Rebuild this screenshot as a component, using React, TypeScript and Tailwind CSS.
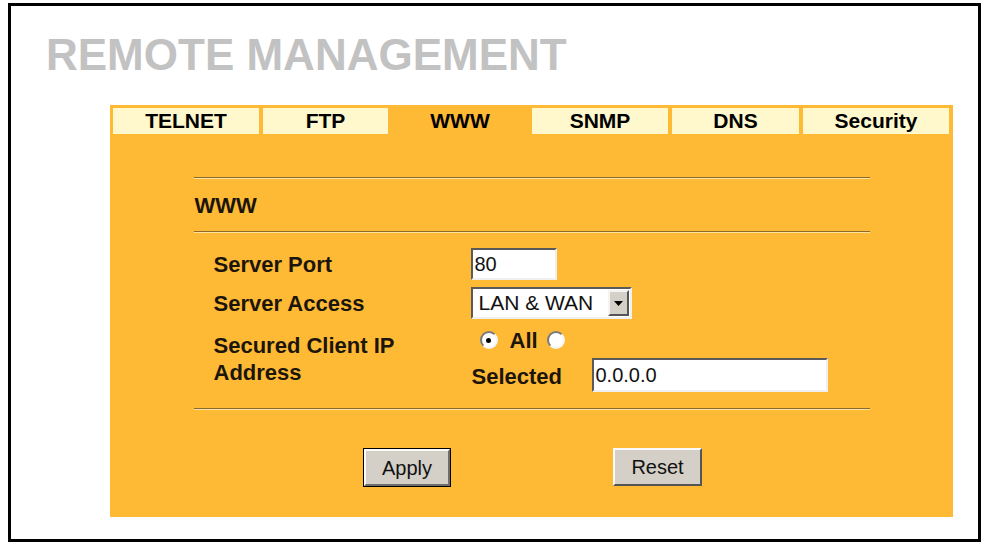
import { useState } from "react";

const tabs = [
  { label: "TELNET", width: "w-[146px]" },
  { label: "FTP", width: "w-[125px]" },
  { label: "WWW", width: "w-[136px]", active: true },
  { label: "SNMP", width: "w-[136px]" },
  { label: "DNS", width: "w-[127px]" },
  { label: "Security", width: "w-[146px]" },
];

const font = "font-['Liberation_Sans',Arial,sans-serif]";

// groove line like an old <hr>
const Rule = () => (
  <div className="h-0 border-t border-b border-t-[#8c6a2c] border-b-[#ffe3a4]" />
);

const Radio = ({ checked }: { checked?: boolean }) => (
  <span className="w-[18px] h-[18px] rounded-full bg-white border-2 border-t-[#7a7a7a] border-l-[#7a7a7a] border-b-[#f4f4f4] border-r-[#f4f4f4] flex items-center justify-center shrink-0">
    {checked && <span className="w-[5px] h-[5px] rounded-full bg-black" />}
  </span>
);

const App = () => {
  const [access] = useState("LAN & WAN");

  return (
    <div className={`w-[987px] h-[545px] bg-white overflow-hidden ${font}`}>
      <div className="ml-[8px] mt-[3px] w-[973px] h-[539px] border-[3px] border-black">
        {/* Title */}
        <h1 className="mt-[27px] pl-[35px] h-[44px] text-[44px] leading-[44px] font-bold text-[#c2c2c2]">
          REMOTE MANAGEMENT
        </h1>

        {/* Panel */}
        <div className="ml-[99px] mt-[28px] w-[843px] bg-[#feba35] pb-[30px]">
          <div className="flex gap-[4px] p-[3px] pb-0">
            {tabs.map((tab) => (
              <div
                key={tab.label}
                className={`${tab.width} h-[26px] flex items-center justify-center text-[21px] font-bold text-black ${
                  tab.active ? "bg-transparent" : "bg-[#fff8cd]"
                }`}
              >
                {tab.label}
              </div>
            ))}
          </div>

          <div className="w-[676px] mx-auto mt-[43px] text-[#1c150c]">
            <Rule />
            <div className="h-[52px] flex items-center pl-[1px] text-[22px] font-bold">
              WWW
            </div>
            <Rule />

            {/* Server Port */}
            <div className="flex items-center mt-[15px] h-[32px]">
              <div className="w-[277px] pl-[20px] text-[22px] font-bold">Server Port</div>
              <div className="w-[86px] h-[32px] bg-white border-2 border-t-[#5a5a5a] border-l-[#5a5a5a] border-b-[#f0f0f0] border-r-[#f0f0f0] flex items-center pl-[2px] text-[20px] text-[#111]">
                80
              </div>
            </div>

            {/* Server Access */}
            <div className="flex items-center mt-[7px] h-[32px]">
              <div className="w-[277px] pl-[20px] text-[22px] font-bold">Server Access</div>
              <div className="w-[161px] h-[32px] bg-white border-2 border-t-[#5a5a5a] border-l-[#5a5a5a] border-b-[#f0f0f0] border-r-[#f0f0f0] flex items-center">
                <span className="flex-1 pl-[6px] text-[21px] text-[#111] whitespace-nowrap">{access}</span>
                <span className="w-[21px] h-[26px] mr-[1px] bg-[#d4d0c8] border-2 border-t-[#f4f4f4] border-l-[#f4f4f4] border-b-[#555] border-r-[#555] flex items-center justify-center">
                  <svg width="9" height="5" viewBox="0 0 9 5">
                    <path d="M0 0h9L4.5 5z" fill="#000" />
                  </svg>
                </span>
              </div>
            </div>

            {/* Secured Client IP Address */}
            <div className="flex mt-[11px]">
              <div className="w-[277px] pl-[20px] pt-[2px] text-[22px] leading-[27px] font-bold">
                Secured Client IP
                <br />
                Address
              </div>
              <div className="flex flex-col">
                <div className="flex items-center h-[20px] pl-[9px] text-[22px] font-bold">
                  <Radio checked />
                  <span className="ml-[12px]">All</span>
                  <span className="ml-[9px]">
                    <Radio />
                  </span>
                </div>
                <div className="flex items-center mt-[8px] h-[34px]">
                  <span className="w-[121px] pl-[1px] pt-[2px] text-[22px] font-bold">Selected</span>
                  <div className="w-[236px] h-[34px] bg-white border-2 border-t-[#5a5a5a] border-l-[#5a5a5a] border-b-[#f0f0f0] border-r-[#f0f0f0] flex items-center pl-[2px] text-[20px] text-[#111]">
                    0.0.0.0
                  </div>
                </div>
              </div>
            </div>

            <div className="mt-[16px]">
              <Rule />
            </div>
          </div>

          {/* Buttons */}
          <div className="flex justify-center gap-[162px] mt-[38px] pl-[2px]">
            <button className="w-[88px] h-[39px] border border-black bg-[#d4d0c8] flex">
              <span className="flex-1 border-2 border-t-[#fafafa] border-l-[#fafafa] border-b-[#6e6e6e] border-r-[#6e6e6e] flex items-center justify-center text-[20px] text-[#111]">
                Apply
              </span>
            </button>
            <button className="w-[89px] h-[38px] bg-[#d4d0c8] border-2 border-t-[#fafafa] border-l-[#fafafa] border-b-[#555] border-r-[#555] flex items-center justify-center text-[20px] text-[#111]">
              Reset
            </button>
          </div>
        </div>
      </div>
    </div>
  );
};

export default App;
